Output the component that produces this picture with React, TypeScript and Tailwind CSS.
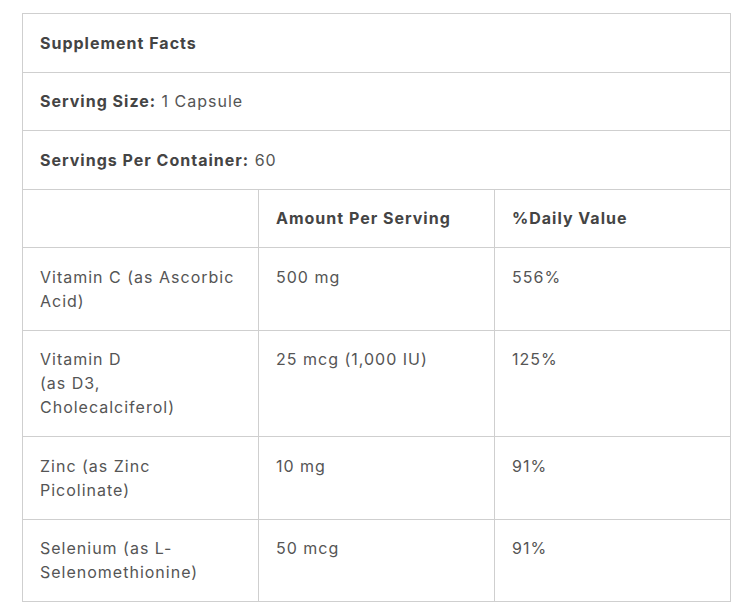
import React from 'react';

const rows = [
  { name: 'Vitamin C (as Ascorbic Acid)', amount: '500 mg', dv: '556%' },
  { name: 'Vitamin D\n(as D3,\nCholecalciferol)', amount: '25 mcg (1,000 IU)', dv: '125%' },
  { name: 'Zinc (as Zinc Picolinate)', amount: '10 mg', dv: '91%' },
  { name: 'Selenium (as L-Selenomethionine)', amount: '50 mcg', dv: '91%' },
];

const cell = 'border border-[#cfcfcf] px-[17px] py-[16.75px] align-top';

const App: React.FC = () => {
  return (
    <div
      className="bg-white min-h-screen pl-[22px] pt-[13px] text-[16px] leading-6 text-[#555] tracking-[1px]"
      style={{ fontFamily: 'Inter, "Noto Sans", sans-serif' }}
    >
      <table className="w-[709px] border-collapse table-fixed">
        <tbody>
          <tr>
            <td colSpan={3} className={cell}>
              <span className="font-bold text-[#444]">Supplement Facts</span>
            </td>
          </tr>
          <tr>
            <td colSpan={3} className={cell}>
              <span className="font-bold text-[#444]">Serving Size:</span> 1 Capsule
            </td>
          </tr>
          <tr>
            <td colSpan={3} className={cell}>
              <span className="font-bold text-[#444]">Servings Per Container:</span> 60
            </td>
          </tr>
          <tr>
            <td className={cell}></td>
            <td className={`${cell} font-bold text-[#444]`}>Amount Per Serving</td>
            <td className={`${cell} font-bold text-[#444]`}>%Daily Value</td>
          </tr>
          {rows.map((r) => (
            <tr key={r.name}>
              <td className={`${cell} whitespace-pre-line`}>{r.name}</td>
              <td className={cell}>{r.amount}</td>
              <td className={cell}>{r.dv}</td>
            </tr>
          ))}
        </tbody>
      </table>
    </div>
  );
};

export default App;
